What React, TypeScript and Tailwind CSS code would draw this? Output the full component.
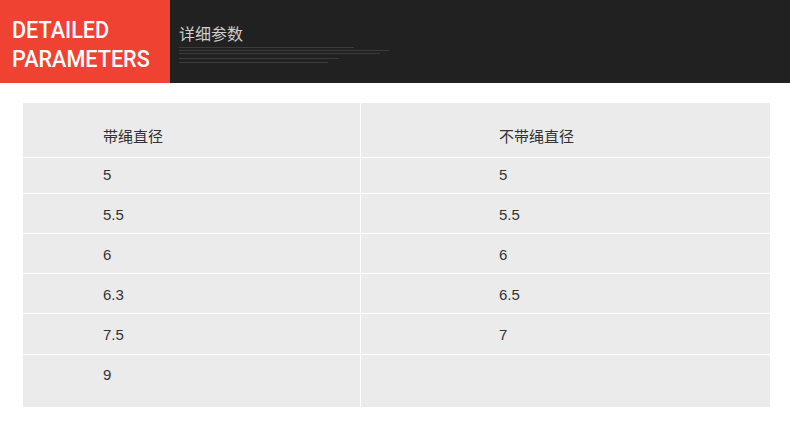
const rows = [
  ["5", "5"],
  ["5.5", "5.5"],
  ["6", "6"],
  ["6.3", "6.5"],
  ["7.5", "7"],
  ["9", ""],
];

// row heights / text offsets measured from the screenshot (1px white rule between rows)
const rowStyles = [
  "h-[35px] pt-[7px]",
  "h-[39px] pt-[11px]",
  "h-[39px] pt-[11px]",
  "h-[39px] pt-[11px]",
  "h-[40px] pt-[11px]",
  "h-[52px] pt-[10px]",
];

export default function App() {
  return (
    <div className="w-[790px] h-[434px] bg-white overflow-hidden" style={{ fontFamily: '"Liberation Sans", "Noto Sans CJK SC", sans-serif' }}>
      {/* header band */}
      <div className="flex h-[83px]">
        <div className="w-[170px] bg-[#ef4232] pl-[12px] pt-[16px]">
          <div className="text-white text-[24px] leading-[29px] font-medium origin-left scale-x-[0.9]" style={{ fontFamily: 'Roboto, sans-serif' }}>
            DETAILED
            <br />
            PARAMETERS
          </div>
        </div>
        <div className="flex-1 bg-[#212121] pl-[9px] pt-[22px]">
          <div className="text-[#cfcfcf] text-[16px] leading-[22px]" style={{ fontFamily: '"Noto Sans CJK SC", sans-serif' }}>
            详细参数
          </div>
          <div className="mt-[3px] flex flex-col">
            <div className="h-px w-[175px] bg-[#3c3c3c]" />
            <div className="h-px w-[210px] bg-[#3c3c3c] mt-[2px]" />
            <div className="h-px w-[201px] bg-[#3c3c3c] mt-[2px]" />
            <div className="h-px w-[160px] bg-[#3c3c3c] mt-[4px]" />
            <div className="h-px w-[149px] bg-[#3c3c3c] mt-[3px]" />
          </div>
        </div>
      </div>

      {/* table */}
      <div className="mt-[20px] ml-[23px] w-[747px] flex flex-col gap-px bg-white text-[#333] text-[15px]">
        <div className="flex h-[54px] gap-px" style={{ fontFamily: '"Noto Sans CJK SC", sans-serif' }}>
          <div className="w-[337px] bg-[#ebebeb] pl-[80px] flex items-center pt-[12px]">带绳直径</div>
          <div className="flex-1 bg-[#ebebeb] pl-[138px] flex items-center pt-[12px]">不带绳直径</div>
        </div>
        {rows.map((r, i) => (
          <div key={i} className="flex gap-px">
            <div className={`w-[337px] bg-[#ebebeb] pl-[80px] leading-[20px] ${rowStyles[i]}`}>{r[0]}</div>
            <div className={`flex-1 bg-[#ebebeb] pl-[138px] leading-[20px] ${rowStyles[i]}`}>{r[1]}</div>
          </div>
        ))}
      </div>
    </div>
  );
}
